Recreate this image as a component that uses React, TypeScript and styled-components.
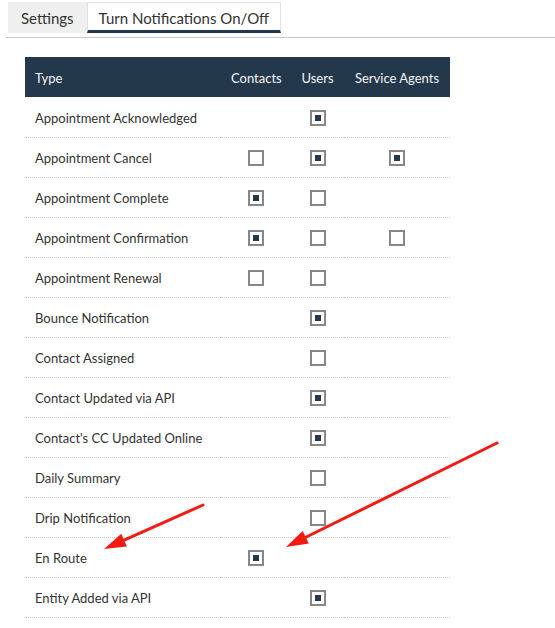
import styled, { createGlobalStyle } from "styled-components";

const GlobalStyle = createGlobalStyle`
  body {
    margin: 0;
    background: #fff;
    font-family: Lato, "Noto Sans", sans-serif;
    color: #333;
  }
`;

const Page = styled.div`
  position: relative;
  width: 555px;
  height: 628px;
  overflow: hidden;
  padding-top: 2px;
  box-sizing: border-box;
`;

const TabBar = styled.div`
  display: flex;
  margin-left: 6px;
  padding-left: 2px;
  border-bottom: 1px solid #c8c8c8;
  height: 36px;
  box-sizing: border-box;
`;

const Tab = styled.div<{ $active?: boolean }>`
  height: 31px;
  padding: 0 ${(p) => (p.$active ? "11px" : "13px")};
  display: flex;
  align-items: center;
  font-size: 15px;
  color: #333;
  box-sizing: border-box;
  background: ${(p) => (p.$active ? "#fff" : "#efefef")};
  border: ${(p) => (p.$active ? "1px solid #e2e2e2" : "none")};
  border-bottom: ${(p) => (p.$active ? "3px solid #24384c" : "none")};
  padding-top: ${(p) => (p.$active ? "2px" : "0")};
`;

const Table = styled.table`
  margin: 19px 0 0 25px;
  width: 425px;
  border-collapse: collapse;
  table-layout: fixed;
  font-size: 13px;
`;

const HeadCell = styled.th<{ $left?: boolean }>`
  background: #24384c;
  color: #f2f4f6;
  font-weight: normal;
  height: 40px;
  box-sizing: border-box;
  padding: 2px 10px 0;
  text-align: ${(p) => (p.$left ? "left" : "center")};
  white-space: nowrap;
`;

const Row = styled.tr`
  height: 40px;
  border-bottom: 1px dotted #c9c9c9;
`;

const Cell = styled.td<{ $left?: boolean }>`
  height: 40px;
  box-sizing: border-box;
  padding: ${(p) => (p.$left ? "2px 10px 0" : "1px 10px 0")};
  text-align: ${(p) => (p.$left ? "left" : "center")};
  vertical-align: middle;
  white-space: nowrap;
`;

const Box = styled.span<{ $checked?: boolean }>`
  display: inline-flex;
  align-items: center;
  justify-content: center;
  width: 16px;
  height: 16px;
  box-sizing: border-box;
  border: 2.5px solid #878787;
  vertical-align: middle;

  &::after {
    content: "";
    width: 6px;
    height: 6px;
    background: ${(p) => (p.$checked ? "#24384c" : "transparent")};
  }
`;

const Overlay = styled.svg`
  position: absolute;
  left: 0;
  top: 0;
  pointer-events: none;
`;

type Val = boolean | null;

const rows: [string, Val, Val, Val][] = [
  ["Appointment Acknowledged", null, true, null],
  ["Appointment Cancel", false, true, true],
  ["Appointment Complete", true, false, null],
  ["Appointment Confirmation", true, false, false],
  ["Appointment Renewal", false, false, null],
  ["Bounce Notification", null, true, null],
  ["Contact Assigned", null, false, null],
  ["Contact Updated via API", null, true, null],
  ["Contact's CC Updated Online", null, true, null],
  ["Daily Summary", null, false, null],
  ["Drip Notification", null, false, null],
  ["En Route", true, null, null],
  ["Entity Added via API", null, true, null],
];

const Arrow = ({ x1, y1, x2, y2 }: { x1: number; y1: number; x2: number; y2: number }) => {
  const a = Math.atan2(y2 - y1, x2 - x1);
  const len = 22;
  const w = 7;
  const bx = x2 - Math.cos(a) * len;
  const by = y2 - Math.sin(a) * len;
  const px = -Math.sin(a) * w;
  const py = Math.cos(a) * w;
  return (
    <g>
      <line x1={x1} y1={y1} x2={bx} y2={by} stroke="#f41a14" strokeWidth={3} strokeLinecap="round" />
      <polygon
        points={`${x2},${y2} ${bx + px},${by + py} ${bx - px},${by - py}`}
        fill="#f41a14"
      />
    </g>
  );
};

export default function App() {
  return (
    <Page>
      <GlobalStyle />
      <TabBar>
        <Tab>Settings</Tab>
        <Tab $active>Turn Notifications On/Off</Tab>
      </TabBar>
      <Table>
        <colgroup>
          <col style={{ width: 196 }} />
          <col style={{ width: 70 }} />
          <col style={{ width: 53 }} />
          <col style={{ width: 106 }} />
        </colgroup>
        <thead>
          <tr>
            <HeadCell $left>Type</HeadCell>
            <HeadCell>Contacts</HeadCell>
            <HeadCell>Users</HeadCell>
            <HeadCell>Service Agents</HeadCell>
          </tr>
        </thead>
        <tbody>
          {rows.map(([name, ...vals]) => (
            <Row key={name}>
              <Cell $left>{name}</Cell>
              {vals.map((v, i) => (
                <Cell key={i}>{v !== null && <Box $checked={v} />}</Cell>
              ))}
            </Row>
          ))}
        </tbody>
      </Table>
      <Overlay width={555} height={628}>
        <Arrow x1={203} y1={505} x2={104} y2={549} />
        <Arrow x1={497} y1={443} x2={286} y2={547} />
      </Overlay>
    </Page>
  );
}
